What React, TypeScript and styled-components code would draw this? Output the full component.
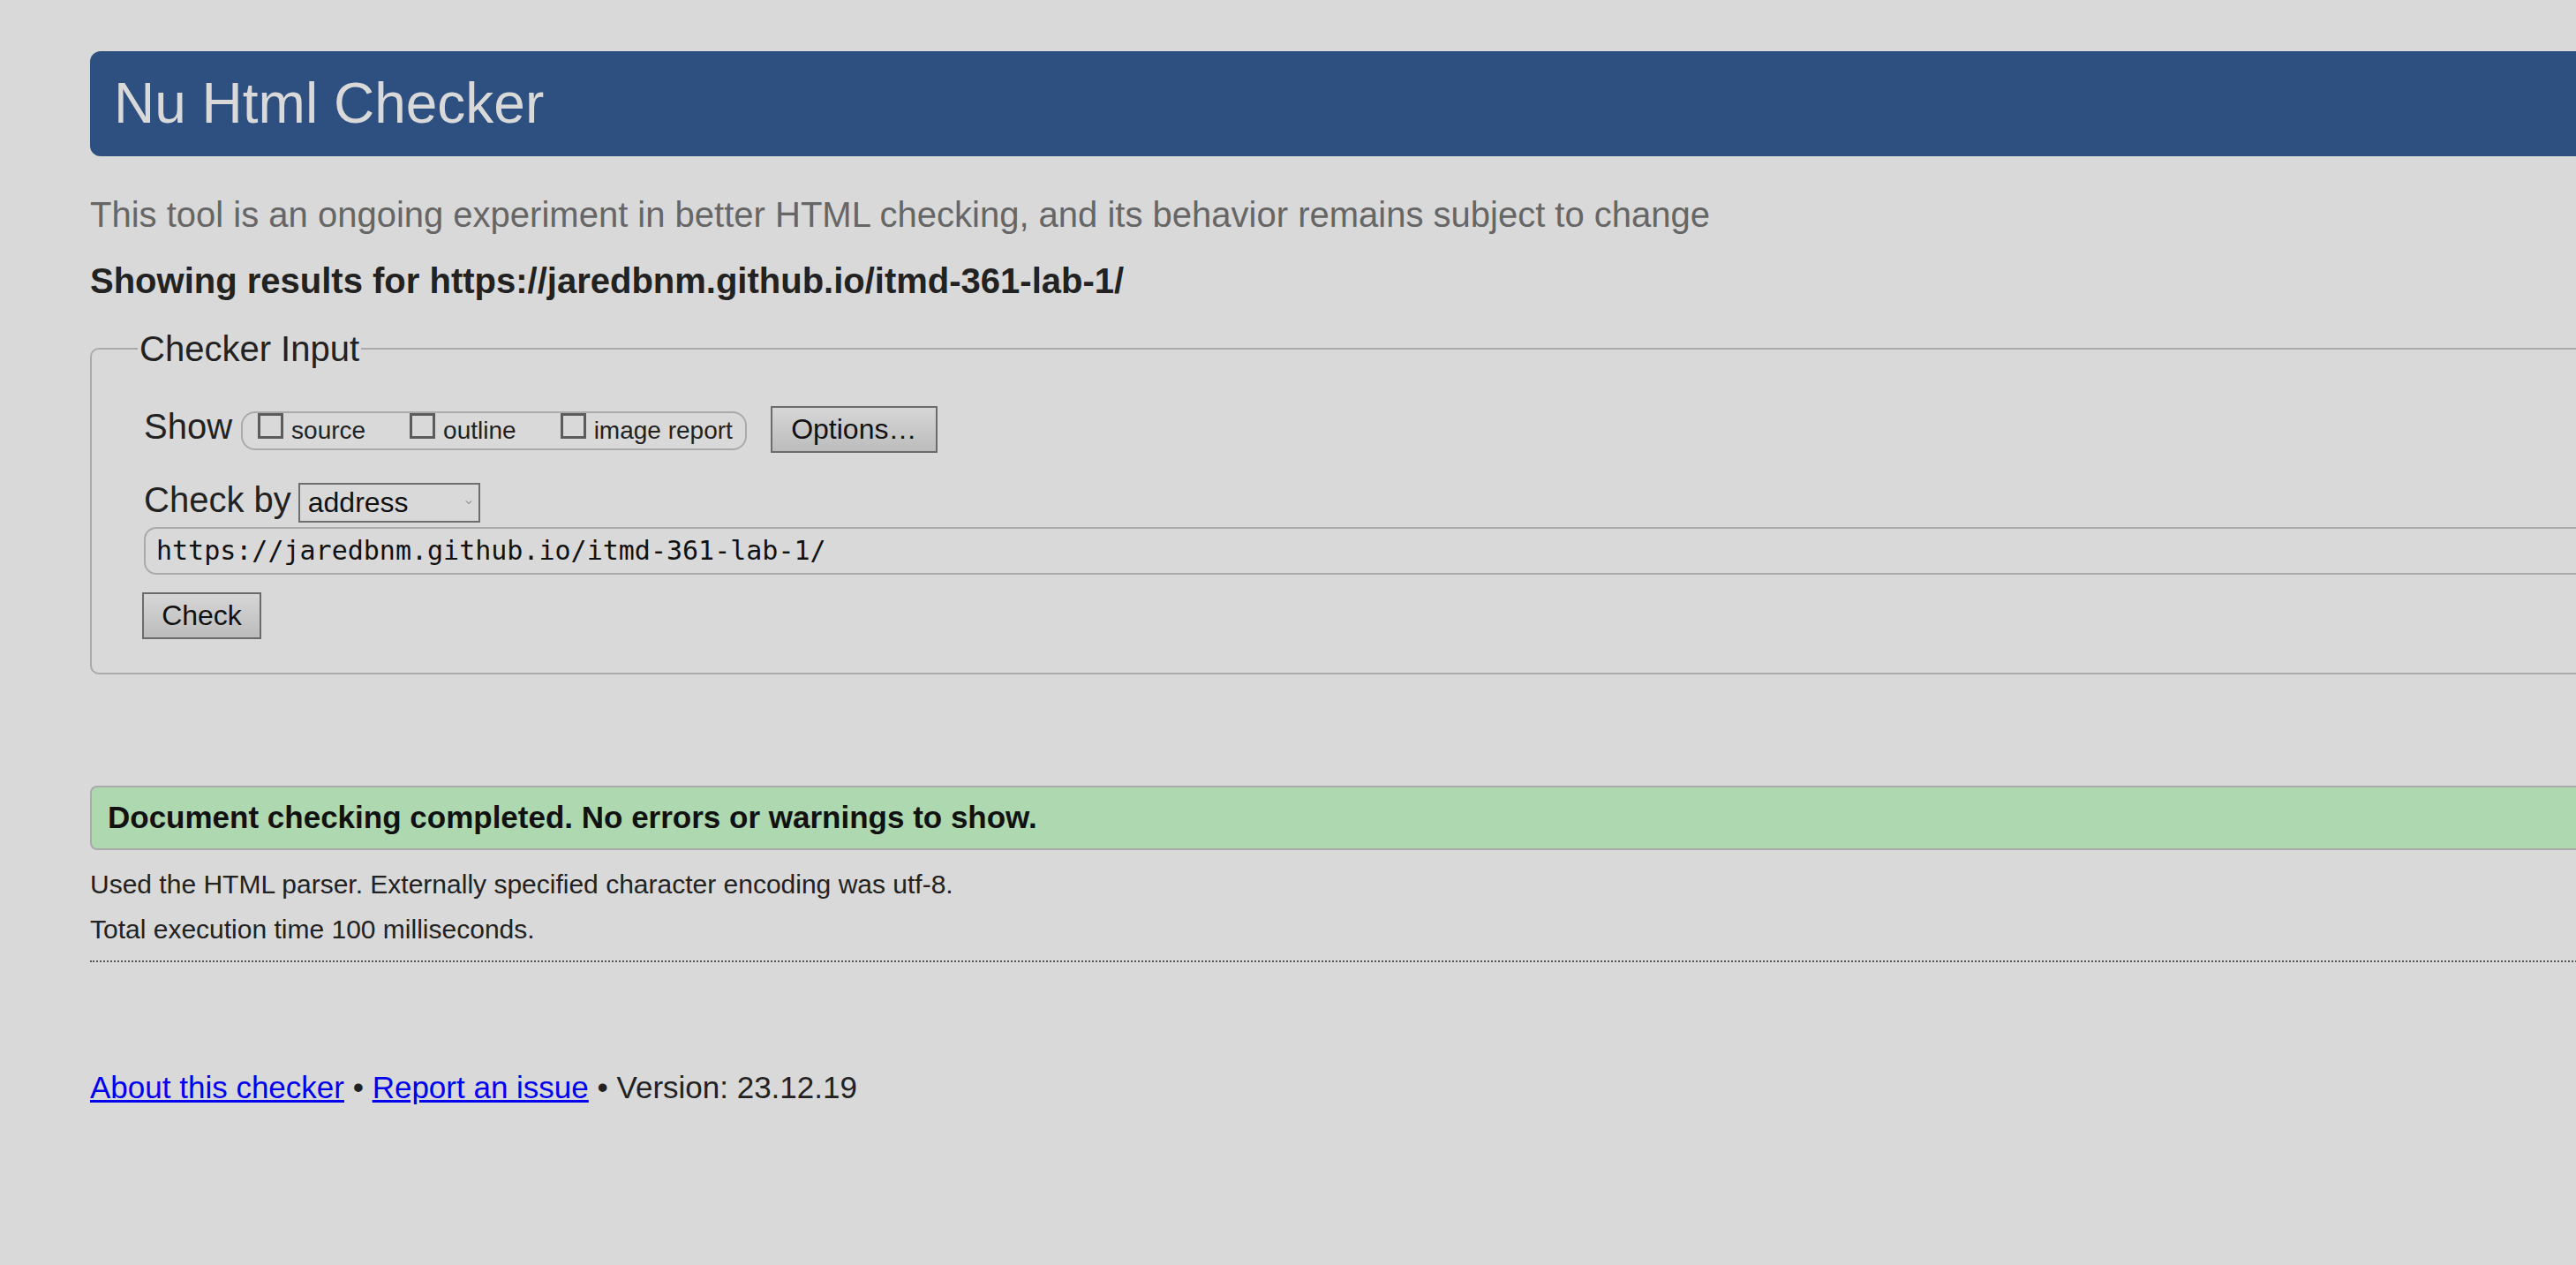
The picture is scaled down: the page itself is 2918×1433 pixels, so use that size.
import React from "react";
import styled, { createGlobalStyle } from "styled-components";

const GlobalStyle = createGlobalStyle`
  html, body {
    margin: 0;
    padding: 0;
    background: #d9d9d9;
    overflow: hidden;
  }
  body {
    font-family: "Liberation Sans", Arial, sans-serif;
    color: #222;
  }
`;

const Page = styled.div`
  width: 3000px;
  padding: 58px 0 0 102px;
`;

const Header = styled.h1`
  margin: 0;
  height: 119px;
  line-height: 119px;
  padding-left: 27px;
  background: #2e5080;
  color: #d9d9d9;
  font-size: 64px;
  font-weight: normal;
  border-radius: 12px 0 0 12px;
`;

const Intro = styled.p`
  margin: 42px 0 0;
  font-size: 40px;
  line-height: 48px;
  color: #666;
`;

const Showing = styled.p`
  margin: 27px 0 0;
  font-size: 40px;
  line-height: 48px;
  font-weight: bold;
  color: #222;
`;

const Fieldset = styled.fieldset`
  margin: 29px 0 0;
  min-width: 0;
  border: 2px solid #aaa;
  border-radius: 10px 0 0 10px;
  padding: 40px 0 38px 59px;
`;

const Legend = styled.legend`
  font-size: 40px;
  line-height: 48px;
  padding: 0 2px;
  margin-left: -7px;
  color: #222;
`;

const Row = styled.div<{ $gap?: number }>`
  display: flex;
  align-items: baseline;
  margin-top: ${(p) => p.$gap ?? 0}px;
`;

const Label = styled.span`
  font-size: 40px;
  line-height: 48px;
  color: #222;
`;

const Group = styled.span`
  display: inline-flex;
  align-items: baseline;
  gap: 50px;
  margin-left: 10px;
  padding: 0 14px 6px 17px;
  border: 2px solid #aaa;
  border-radius: 16px;
`;

const Option = styled.label`
  display: inline-flex;
  align-items: baseline;
  font-size: 28px;
  line-height: 28px;
  color: #222;
`;

const Box = styled.input`
  appearance: none;
  width: 29px;
  height: 29px;
  margin: 0 9px 3px 0;
  border: 3px solid #5c5c5c;
  background: transparent;
  box-sizing: border-box;
  border-radius: 0;
`;

const Button = styled.button<{ $w: number }>`
  width: ${(p) => p.$w}px;
  height: 53px;
  box-sizing: border-box;
  border: 2px solid #6b6b6b;
  background: linear-gradient(#d6d6d6, #bcbcbc);
  font-family: "Liberation Sans", Arial, sans-serif;
  font-size: 32px;
  color: #111;
  padding: 0;
  border-radius: 0;
`;

const OptionsButton = styled(Button)`
  margin-left: 27px;
`;

const SelectWrap = styled.span`
  position: relative;
  display: inline-block;
  margin-left: 8px;
`;

const Select = styled.select`
  appearance: none;
  width: 206px;
  height: 45px;
  box-sizing: border-box;
  border: 2px solid #6e6e6e;
  background: transparent;
  font-family: "Liberation Sans", Arial, sans-serif;
  font-size: 32px;
  color: #111;
  padding: 0 0 0 9px;
  border-radius: 0;
`;

const Chevron = styled.svg`
  position: absolute;
  right: 9px;
  top: 19px;
  pointer-events: none;
`;

const UrlInput = styled.input`
  display: block;
  width: 100%;
  height: 54px;
  box-sizing: border-box;
  margin-top: 5px;
  border: 2px solid #aaa;
  border-radius: 14px 0 0 14px;
  background: transparent;
  padding: 0 0 0 12px;
  font-family: "DejaVu Sans Mono", "Liberation Mono", monospace;
  font-size: 30px;
  color: #111;
`;

const CheckRow = styled.div`
  margin-top: 20px;
  margin-left: -2px;
`;

const Success = styled.div`
  margin-top: 126px;
  height: 73px;
  box-sizing: border-box;
  border: 2px solid #aaa;
  border-right: none;
  border-radius: 8px 0 0 8px;
  background: #aed8b0;
  padding-left: 18px;
  display: flex;
  align-items: center;
  font-size: 35px;
  font-weight: bold;
  color: #111;
`;

const Detail = styled.p<{ $top: number }>`
  margin: ${(p) => p.$top}px 0 0;
  font-size: 30px;
  line-height: 34px;
  color: #222;
`;

const Dotted = styled.hr`
  margin: 18px 0 0;
  border: none;
  border-top: 2px dotted #555;
  height: 0;
`;

const Footer = styled.p`
  margin: 122px 0 0;
  font-size: 35px;
  line-height: 40px;
  color: #222;
`;

const Link = styled.a`
  color: #0000ee;
  text-decoration: underline;
`;

export default function App() {
  return (
    <>
      <GlobalStyle />
      <Page>
        <Header>Nu Html Checker</Header>
        <Intro>
          This tool is an ongoing experiment in better HTML checking, and its
          behavior remains subject to change
        </Intro>
        <Showing>Showing results for https://jaredbnm.github.io/itmd-361-lab-1/</Showing>
        <Fieldset>
          <Legend>Checker Input</Legend>
          <Row>
            <Label>Show</Label>
            <Group>
              <Option>
                <Box type="checkbox" />
                source
              </Option>
              <Option>
                <Box type="checkbox" />
                outline
              </Option>
              <Option>
                <Box type="checkbox" />
                image report
              </Option>
            </Group>
            <OptionsButton $w={189} type="button">
              Options…
            </OptionsButton>
          </Row>
          <Row $gap={29}>
            <Label>Check by</Label>
            <SelectWrap>
              <Select defaultValue="address">
                <option value="address">address</option>
                <option value="file">file upload</option>
                <option value="text">text input</option>
              </Select>
              <Chevron width="8" height="6" viewBox="0 0 8 6">
                <path d="M1 1.5 L4 4.5 L7 1.5" fill="none" stroke="#666" strokeWidth="1" />
              </Chevron>
            </SelectWrap>
          </Row>
          <UrlInput type="url" defaultValue="https://jaredbnm.github.io/itmd-361-lab-1/" />
          <CheckRow>
            <Button $w={135} type="button">
              Check
            </Button>
          </CheckRow>
        </Fieldset>
        <Success>Document checking completed. No errors or warnings to show.</Success>
        <Detail $top={22}>
          Used the HTML parser. Externally specified character encoding was utf-8.
        </Detail>
        <Detail $top={17}>Total execution time 100 milliseconds.</Detail>
        <Dotted />
        <Footer>
          <Link href="#about">About this checker</Link> •{" "}
          <Link href="#issue">Report an issue</Link> • Version: 23.12.19
        </Footer>
      </Page>
    </>
  );
}
